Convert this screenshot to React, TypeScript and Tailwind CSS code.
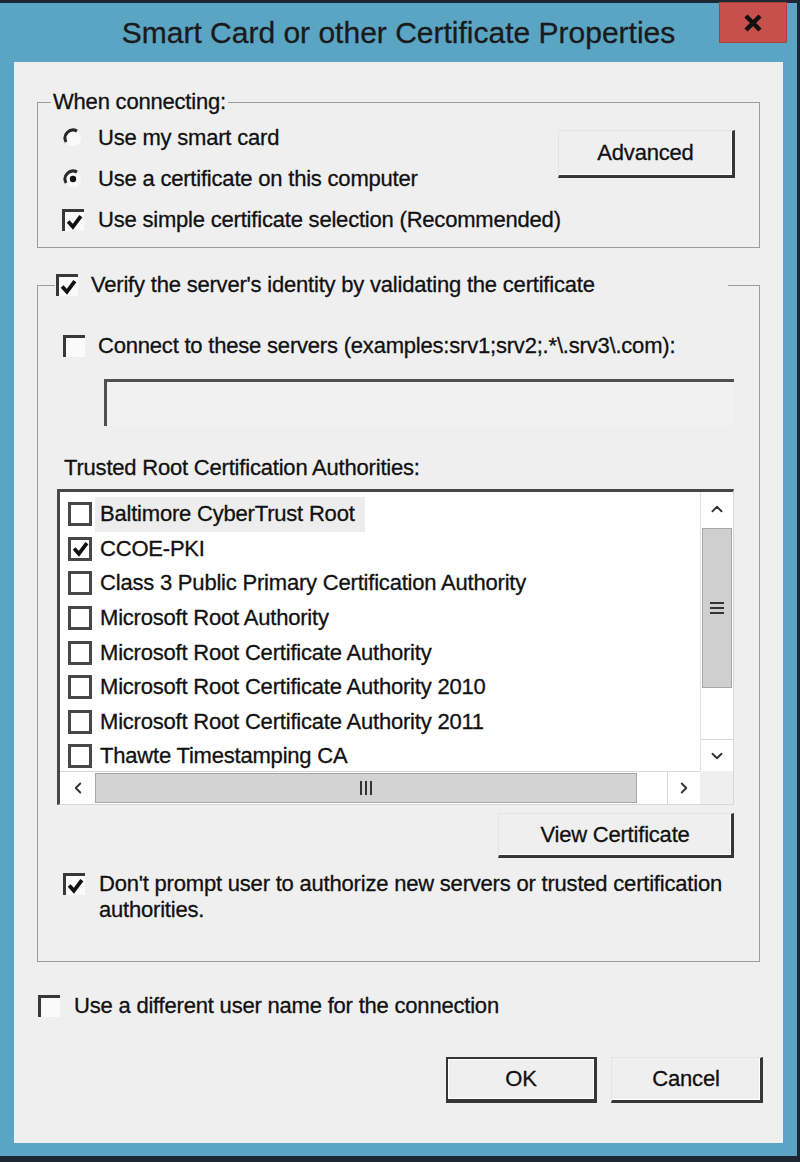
import { ChevronDown, ChevronLeft, ChevronRight, ChevronUp } from "lucide-react";

const authorities = [
  { name: "Baltimore CyberTrust Root", checked: false, focus: true },
  { name: "CCOE-PKI", checked: true },
  { name: "Class 3 Public Primary Certification Authority", checked: false },
  { name: "Microsoft Root Authority", checked: false },
  { name: "Microsoft Root Certificate Authority", checked: false },
  { name: "Microsoft Root Certificate Authority 2010", checked: false },
  { name: "Microsoft Root Certificate Authority 2011", checked: false },
  { name: "Thawte Timestamping CA", checked: false },
];

function Tick() {
  return (
    <svg viewBox="0 0 16 16" className="h-[17px] w-[17px]">
      <path d="M2 8 6.5 13 14 3" fill="none" stroke="#111" strokeWidth="3.6" />
    </svg>
  );
}

// classic sunken checkbox: dark top/left edge only
function SunkenBox({ checked = false }: { checked?: boolean }) {
  return (
    <span className="flex h-[22px] w-[22px] shrink-0 items-center justify-center border-t-[3px] border-l-[3px] border-[#383838] bg-[#fafafa]">
      {checked && <Tick />}
    </span>
  );
}

function ListBox({ checked = false }: { checked?: boolean }) {
  return (
    <span className="flex h-[24px] w-[24px] shrink-0 items-center justify-center border-[3px] border-[#474747] bg-white">
      {checked && <Tick />}
    </span>
  );
}

function Radio({ checked = false }: { checked?: boolean }) {
  return (
    <svg width="22" height="22" viewBox="0 0 22 22" className="shrink-0">
      <circle cx="11" cy="11" r="8" fill="#fafafa" />
      <path d="M4.1 15A8 8 0 0 1 15 4.1" fill="none" stroke="#2a2a2a" strokeWidth="3" />
      {checked && <circle cx="11" cy="11" r="3.2" fill="#111" />}
    </svg>
  );
}

function Button({ label, className }: { label: string; className: string }) {
  return (
    <button
      className={
        "flex items-center justify-center border-t border-l border-t-[#e4e4e4] border-l-[#e4e4e4] border-r-[3px] border-b-[3px] border-r-[#363636] border-b-[#363636] bg-[#efeff0] shadow-[inset_-1px_-1px_0_#fff] " +
        className
      }
    >
      {label}
    </button>
  );
}

function Row({ children, className = "" }: { children: React.ReactNode; className?: string }) {
  return <div className={"flex items-center whitespace-nowrap " + className}>{children}</div>;
}

export default function App() {
  return (
    <div className="h-[1162px] w-[800px] bg-[#1c2733] pt-[3px] pr-[3px] pb-[6px] font-['Liberation_Sans',Arial,sans-serif] text-[#111]">
      <div className="flex h-full flex-col bg-[#5aa4c4] px-[14px] pb-[13px]">
        {/* Title bar */}
        <div className="-mx-[14px] grid h-[59px] shrink-0 grid-cols-[1fr_auto_1fr] items-start">
          <div />
          <h1 className="mt-[13px] whitespace-nowrap text-[30px] leading-[34px] text-[#1a1a1a] [-webkit-text-stroke:0.3px_#1a1a1a]">
            Smart Card or other Certificate Properties
          </h1>
          <div className="flex justify-end">
            <button className="-mt-[1px] mr-[10px] flex h-[41px] w-[68px] items-center justify-center border border-[#a8413c] bg-[#c8504c]">
              <svg width="22" height="18" viewBox="0 0 22 18">
                <path d="M4 2 18 16M18 2 4 16" stroke="#111" strokeWidth="4.5" />
              </svg>
            </button>
          </div>
        </div>

        {/* Dialog body */}
        <div className="flex flex-1 flex-col bg-[#efeff0] text-[22px] leading-[26px] tracking-[-0.2px] [-webkit-text-stroke:0.3px_#111]">
          {/* When connecting */}
          <fieldset className="mx-[23px] mt-[27px] min-w-0 border border-[#9c9c9c]">
            <legend className="ml-[13px] px-[2px] leading-[26px]">When connecting:</legend>
            <div className="flex px-[24px] pt-[2px] pb-[7px]">
              <div className="flex min-w-0 flex-1 flex-col">
                <Row className="h-[41px] gap-[14px]">
                  <Radio />
                  <span>Use my smart card</span>
                </Row>
                <Row className="h-[41px] gap-[14px]">
                  <Radio checked />
                  <span>Use a certificate on this computer</span>
                </Row>
                <Row className="h-[41px] gap-[14px]">
                  <SunkenBox checked />
                  <span>Use simple certificate selection (Recommended)</span>
                </Row>
              </div>
              <Button label="Advanced" className="mt-[13px] h-[48px] w-[177px] shrink-0" />
            </div>
          </fieldset>

          {/* Verify server identity */}
          <fieldset className="mx-[23px] mt-[24px] min-w-0 border border-[#9c9c9c]">
            <legend className="ml-[17px] flex h-[26px] w-[673px] items-center gap-[13px] whitespace-nowrap px-[1px]">
              <SunkenBox checked />
              <span>Verify the server's identity by validating the certificate</span>
            </legend>
            <div className="flex flex-col pr-[25px] pb-[38px] pl-[19px]">
              <Row className="mt-[27px] ml-[6px] h-[41px] gap-[13px]">
                <SunkenBox />
                <span>Connect to these servers (examples:srv1;srv2;.*\.srv3\.com):</span>
              </Row>
              <div className="mt-[13px] ml-[47px] h-[47px] border-t-[3px] border-l-[3px] border-[#505050] bg-[#f1f1f2]" />
              <div className="mt-[29px] ml-[7px] h-[26px]">Trusted Root Certification Authorities:</div>

              {/* Certificate list */}
              <div className="mt-[8px] flex flex-col border-t-[3px] border-l-[3px] border-r border-b border-t-[#474747] border-l-[#474747] border-r-[#d8d8d8] border-b-[#d8d8d8] bg-white">
                <div className="flex h-[279px]">
                  <div className="min-w-0 flex-1 overflow-hidden pt-[5px] pl-[8px]">
                    {authorities.map((a) => (
                      <div key={a.name} className="flex h-[34.6px] items-center gap-[3px]">
                        <ListBox checked={a.checked} />
                        <span
                          className={
                            "flex h-full items-center whitespace-nowrap pr-[10px] pl-[5px] " +
                            (a.focus ? "bg-[#ededed]" : "")
                          }
                        >
                          {a.name}
                        </span>
                      </div>
                    ))}
                  </div>
                  <div className="flex w-[33px] flex-col border-l border-[#e2e2e2] bg-white">
                    <div className="flex h-[33px] items-center justify-center">
                      <ChevronUp size={18} strokeWidth={2.5} color="#333" />
                    </div>
                    <div className="mx-[1px] mt-[3px] flex h-[160px] items-center justify-center border border-[#a8a8a8] bg-[#cfcfd0]">
                      <div className="flex flex-col gap-[3px]">
                        <span className="h-[2px] w-[14px] bg-[#333]" />
                        <span className="h-[2px] w-[14px] bg-[#333]" />
                        <span className="h-[2px] w-[14px] bg-[#333]" />
                      </div>
                    </div>
                    <div className="flex-1" />
                    <div className="flex h-[32px] items-center justify-center border-t border-[#d8d8d8]">
                      <ChevronDown size={18} strokeWidth={2.5} color="#333" />
                    </div>
                  </div>
                </div>
                <div className="flex h-[33px]">
                  <div className="flex flex-1 border-t border-[#d8d8d8] bg-white">
                    <div className="flex w-[35px] items-center justify-center">
                      <ChevronLeft size={18} strokeWidth={2.5} color="#333" />
                    </div>
                    <div className="my-[1px] flex flex-1 items-center justify-center border border-[#a8a8a8] bg-[#d3d3d4]">
                      <div className="flex gap-[3px]">
                        <span className="h-[14px] w-[2px] bg-[#333]" />
                        <span className="h-[14px] w-[2px] bg-[#333]" />
                        <span className="h-[14px] w-[2px] bg-[#333]" />
                      </div>
                    </div>
                    <div className="w-[30px]" />
                    <div className="flex w-[33px] items-center justify-center border-l border-[#d8d8d8]">
                      <ChevronRight size={18} strokeWidth={2.5} color="#333" />
                    </div>
                  </div>
                  <div className="w-[33px] bg-[#efeff0]" />
                </div>
              </div>

              <Button label="View Certificate" className="mt-[8px] h-[45px] w-[236px] self-end" />

              <div className="mt-[13px] ml-[6px] flex items-start gap-[14px]">
                <span className="mt-[2px]">
                  <SunkenBox checked />
                </span>
                <span className="whitespace-nowrap">
                  Don't prompt user to authorize new servers or trusted certification
                  <br />
                  authorities.
                </span>
              </div>
            </div>
          </fieldset>

          <Row className="mt-[31px] ml-[24px] h-[26px] gap-[14px]">
            <SunkenBox />
            <span>Use a different user name for the connection</span>
          </Row>

          <div className="mt-[38px] flex justify-end gap-[14px] pr-[20px]">
            <button className="flex h-[46px] w-[151px] items-center justify-center border-2 border-r-[3px] border-b-[4px] border-[#363636] bg-[#efeff0] shadow-[inset_1px_1px_0_#fff,inset_-1px_-1px_0_#fff]">
              OK
            </button>
            <Button label="Cancel" className="h-[46px] w-[152px]" />
          </div>
        </div>
      </div>
    </div>
  );
}
